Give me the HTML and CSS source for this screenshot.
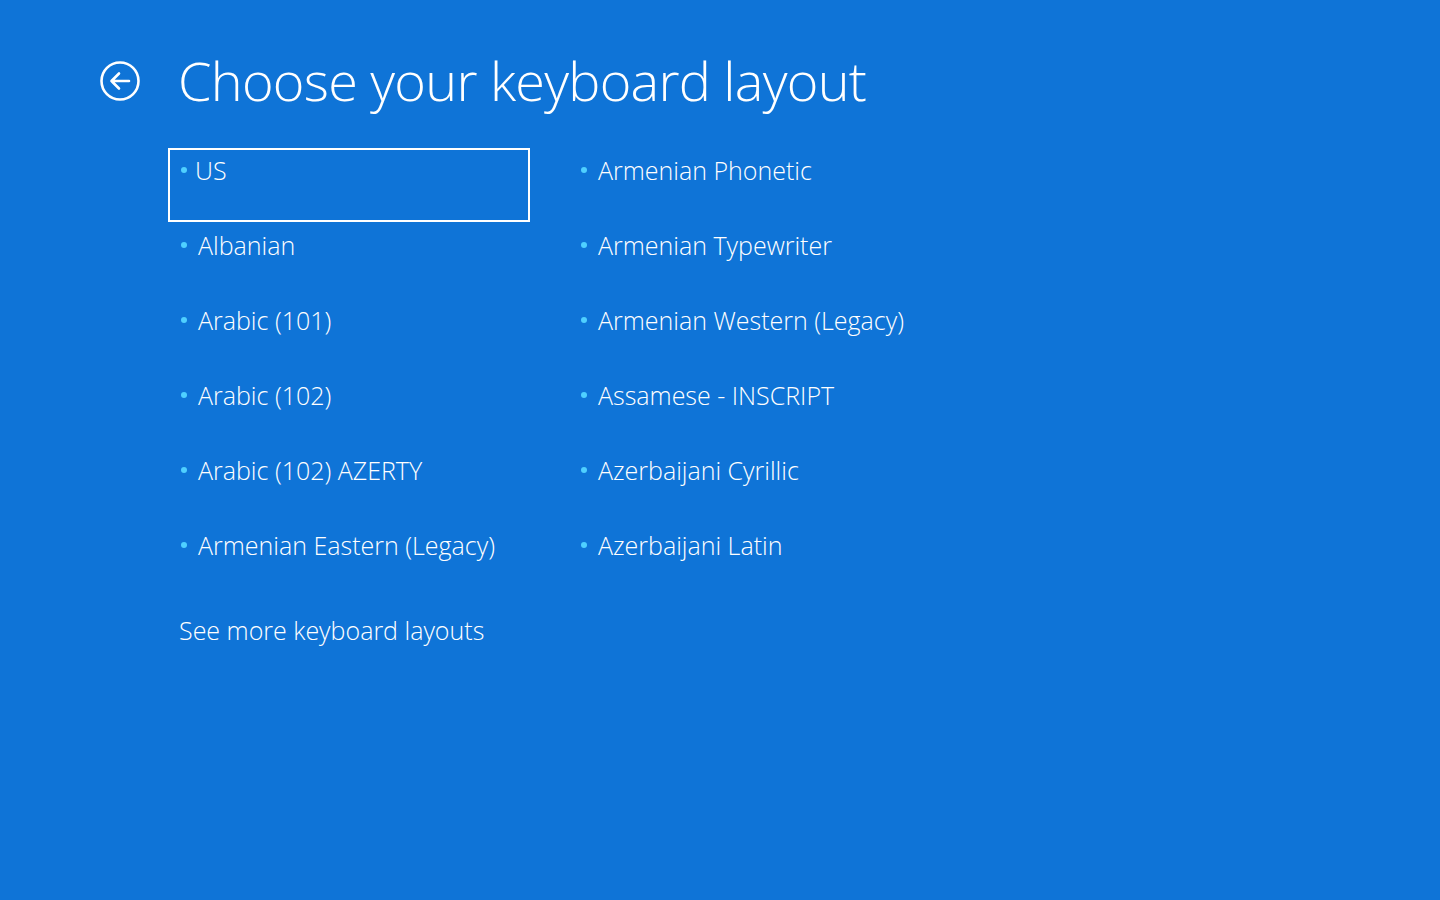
FILE: index.html
```html
<!DOCTYPE html>
<html lang="en">
<head>
<meta charset="utf-8">
<title>Choose your keyboard layout</title>
<link rel="stylesheet" href="styles.css">
</head>
<body>
<div class="page">
  <header class="header">
    <button class="back" aria-label="Back">
      <svg width="42" height="42" viewBox="0 0 42 42" fill="none" stroke="#fff">
        <circle cx="21" cy="21" r="18.5" stroke-width="2.6"/>
        <path d="M30 21H12.5M20 13.5L12.5 21L20 28.5" stroke-width="2.6" stroke-linecap="round" stroke-linejoin="round"/>
      </svg>
    </button>
    <h1 class="title">Choose your keyboard layout</h1>
  </header>
  <ul class="layouts">
    <li class="item focused"><span class="dot"></span>US</li>
    <li class="item"><span class="dot"></span>Armenian Phonetic</li>
    <li class="item"><span class="dot"></span>Albanian</li>
    <li class="item"><span class="dot"></span>Armenian Typewriter</li>
    <li class="item"><span class="dot"></span>Arabic (101)</li>
    <li class="item"><span class="dot"></span>Armenian Western (Legacy)</li>
    <li class="item"><span class="dot"></span>Arabic (102)</li>
    <li class="item"><span class="dot"></span>Assamese - INSCRIPT</li>
    <li class="item"><span class="dot"></span>Arabic (102) AZERTY</li>
    <li class="item"><span class="dot"></span>Azerbaijani Cyrillic</li>
    <li class="item"><span class="dot"></span>Armenian Eastern (Legacy)</li>
    <li class="item"><span class="dot"></span>Azerbaijani Latin</li>
  </ul>
  <a class="more" href="#">See more keyboard layouts</a>
</div>
</body>
</html>
```
FILE: styles.css
```css
html, body {
  margin: 0;
  height: 100%;
}
body {
  background: #0f74d7;
  color: #fff;
  font-family: "Open Sans", "Noto Sans", sans-serif;
  overflow: hidden;
}
.page {
  padding: 49px 0 0 99px;
}
.header {
  display: flex;
  align-items: center;
  gap: 37px;
}
.back {
  background: none;
  border: 0;
  padding: 0;
  width: 42px;
  height: 42px;
  display: flex;
  margin-top: 2px;
}
.title {
  margin: 0;
  font-weight: 300;
  font-size: 54px;
  line-height: 62px;
  letter-spacing: -0.75px;
}
.layouts {
  list-style: none;
  margin: 37px 0 0 69px;
  padding: 0;
  display: grid;
  grid-template-columns: 362px 362px;
  column-gap: 38px;
  grid-auto-rows: 75px;
}
.item {
  box-sizing: border-box;
  height: 74px;
  border: 2px solid transparent;
  padding: 4px 0 0 10px;
  display: flex;
  align-items: flex-start;
  font-weight: 300;
  font-size: 25px;
  line-height: 32px;
}
.item.focused {
  border-color: #fff;
}
.dot {
  width: 6px;
  height: 6px;
  border-radius: 50%;
  background: #4fd0ff;
  margin: 13px 11px 0 1px;
  flex: none;
}
.focused .dot {
  margin-right: 8px;
}
.more {
  display: inline-block;
  margin: 16px 0 0 80px;
  color: #fff;
  text-decoration: none;
  font-weight: 300;
  font-size: 25px;
  line-height: 32px;
}
```
